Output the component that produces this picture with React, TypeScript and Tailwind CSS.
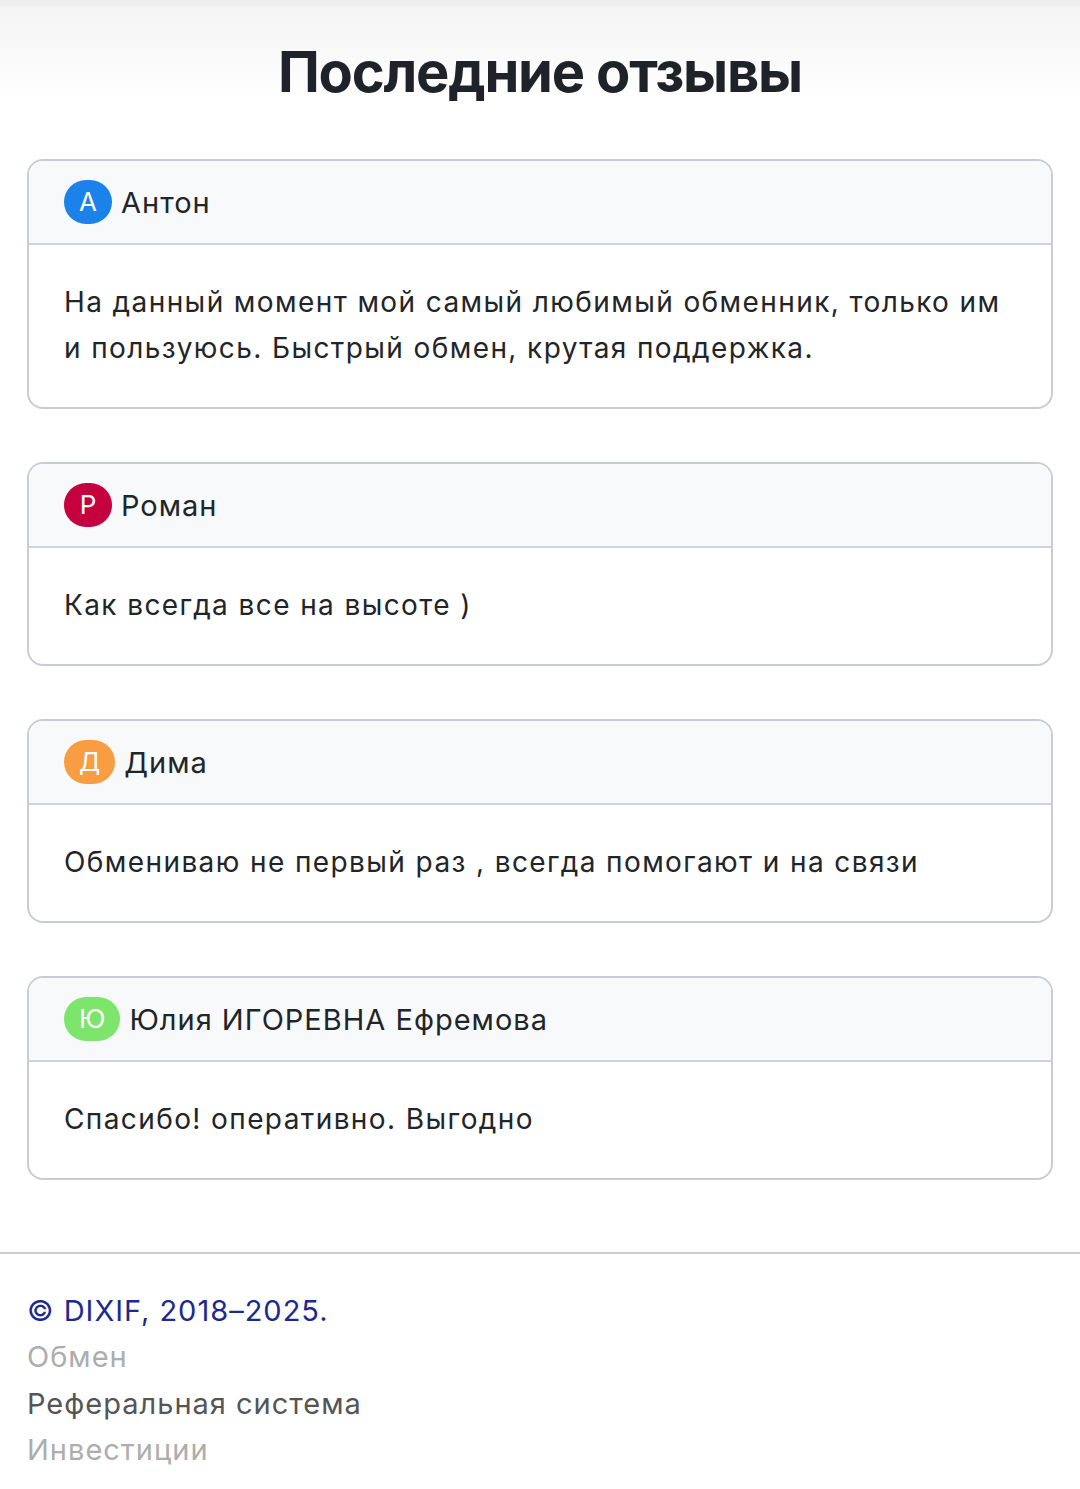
import React from "react";

const reviews = [
  { initial: "А", name: "Антон", color: "bg-[#1a82e8]", text: "На данный момент мой самый любимый обменник, только им и пользуюсь. Быстрый обмен, крутая поддержка." },
  { initial: "Р", name: "Роман", color: "bg-[#c5023f]", text: "Как всегда все на высоте )" },
  { initial: "Д", name: "Дима", color: "bg-[#f89d42]", text: "Обмениваю не первый раз , всегда помогают и на связи" },
  { initial: "Ю", name: "Юлия ИГОРЕВНА Ефремова", color: "bg-[#7de56b]", text: "Спасибо! оперативно. Выгодно" },
];

export default function App() {
  return (
    <div className="min-h-[1489px] bg-white text-[#212529]" style={{ fontFamily: "Inter, 'Noto Sans', sans-serif" }}>
      <div className="h-[6px] bg-[#eeeeee]" />
      <div className="bg-gradient-to-b from-[#f4f4f4] to-white pt-[34px]">
        <h1 className="text-center text-[56px] font-bold leading-[64px] tracking-[-1.2px] text-[#1f2329]">Последние отзывы</h1>
      </div>
      <div className="px-[27px] pt-[55px] flex flex-col gap-[53px]">
        {reviews.map((r) => (
          <div key={r.name} className="rounded-[16px] border-2 border-[#c9cdd3] overflow-hidden">
            <div className="h-[84px] bg-[#f8f9fa] border-b-2 border-[#d0d3d8] flex items-center px-[35px] gap-[9px]">
              <span className={`${r.color} text-white rounded-full h-[44px] min-w-[48px] px-[15px] flex items-center justify-center text-[26px] leading-none`}>{r.initial}</span>
              <span className="text-[29px] leading-none tracking-[1px]">{r.name}</span>
            </div>
            <div className="px-[35px] pt-[34px] pb-[36px] text-[28px] leading-[46px] tracking-[1.4px]">{r.text}</div>
          </div>
        ))}
      </div>
      <div className="mt-[72px] border-t-2 border-[#cccccc] px-[27px] pt-[34px] text-[29px] leading-[46.3px] tracking-[1px]">
        <div className="text-[#1b2a8e]">© DIXIF, 2018–2025.</div>
        <div className="text-[#adadad]">Обмен</div>
        <div className="text-[#555555]">Реферальная система</div>
        <div className="text-[#adadad]">Инвестиции</div>
      </div>
    </div>
  );
}
